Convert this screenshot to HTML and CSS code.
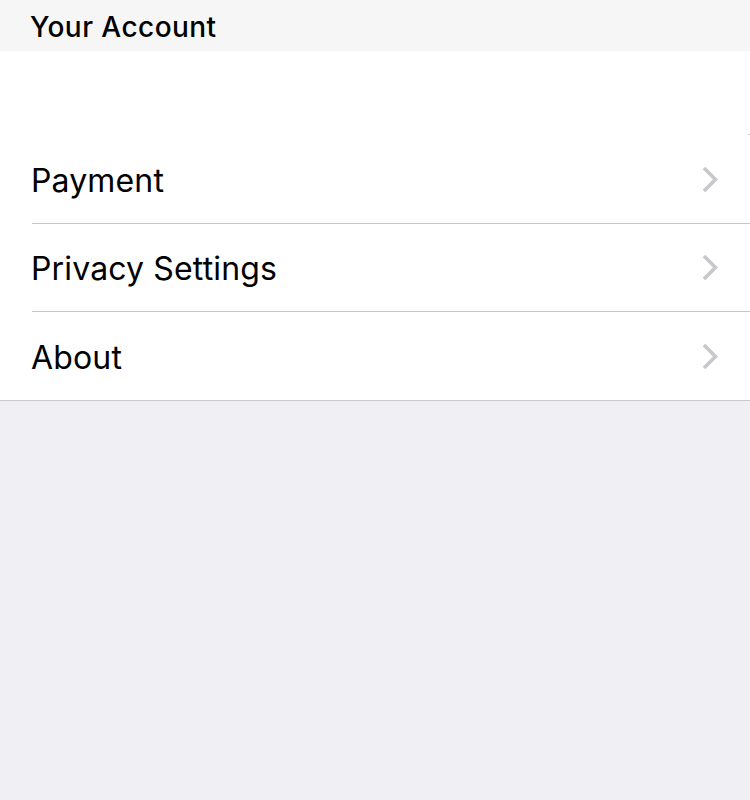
FILE: index.html
```html
<!DOCTYPE html>
<html>
<head>
<meta charset="utf-8">
<link rel="stylesheet" href="styles.css">
</head>
<body>
<header class="header"><h1 class="title">Your Account</h1></header>
<section class="group">
  <div class="spacer"><span class="tick"></span></div>
  <ul class="list">
    <li class="row"><span class="label">Payment</span><svg class="chev" viewBox="0 0 16 27" width="16" height="27"><path d="M2 2 L13.5 13.5 L2 25" fill="none" stroke="#c7c7cc" stroke-width="3.6"/></svg></li>
    <li class="row"><span class="label">Privacy Settings</span><svg class="chev" viewBox="0 0 16 27" width="16" height="27"><path d="M2 2 L13.5 13.5 L2 25" fill="none" stroke="#c7c7cc" stroke-width="3.6"/></svg></li>
    <li class="row last"><span class="label">About</span><svg class="chev" viewBox="0 0 16 27" width="16" height="27"><path d="M2 2 L13.5 13.5 L2 25" fill="none" stroke="#c7c7cc" stroke-width="3.6"/></svg></li>
  </ul>
</section>
</body>
</html>
```
FILE: styles.css
```css
html, body {
  margin: 0;
  padding: 0;
  background: #efeff4;
  font-family: Inter, "Liberation Sans", sans-serif;
  color: #000;
}
.header {
  background: #f6f6f6;
  height: 51px;
  box-sizing: border-box;
  padding-left: 30px;
  display: flex;
  align-items: flex-start;
}
.title {
  margin: 0;
  font-size: 28px;
  font-weight: 500;
  line-height: 28px;
  padding-top: 13px;
  letter-spacing: 0.45px;
}
.group {
  background: #fff;
  border-bottom: 1px solid #c8c7cc;
}
.spacer {
  height: 85px;
  display: flex;
  align-items: flex-end;
  justify-content: flex-end;
}
.tick {
  width: 2px;
  height: 1px;
  margin-bottom: 1px;
  background: #c8c7cc;
}
.list {
  list-style: none;
  margin: 0;
  padding: 0 0 0 32px;
}
.row {
  height: 87px;
  border-bottom: 1px solid #c8c7cc;
  display: flex;
  align-items: center;
  justify-content: space-between;
  padding-right: 32px;
}
.row.last {
  height: 88px;
  border-bottom: none;
}
.label {
  font-size: 32px;
  margin-left: -1px;
  padding-top: 2px;
  letter-spacing: 0.15px;
}
.chev {
  display: block;
}
```
